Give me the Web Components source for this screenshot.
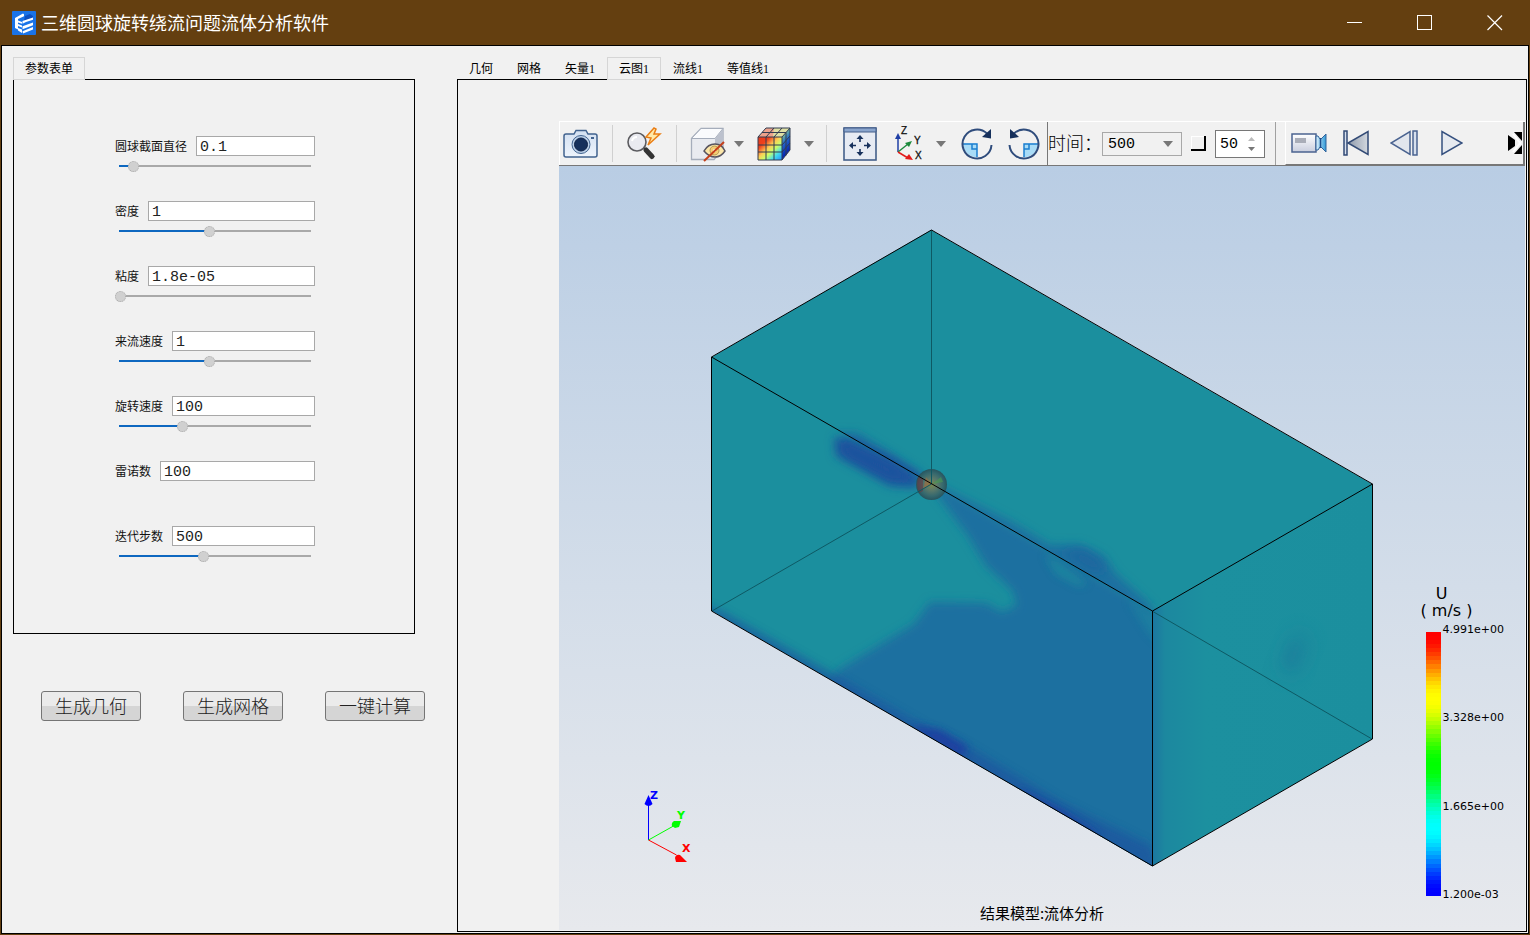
<!DOCTYPE html>
<html lang="zh-CN">
<head>
<meta charset="utf-8">
<title>三维圆球旋转绕流问题流体分析软件</title>
<style>
body{margin:0;background:#643f10;font-family:"Liberation Sans","Noto Sans CJK SC",sans-serif;color:#000}
</style>
</head>
<body>
<app-window caption="三维圆球旋转绕流问题流体分析软件">
  <side-panel></side-panel>
  <result-panel></result-panel>
</app-window>

<template id="t-window">
<style>
:host{display:flex;flex-direction:column;min-height:100vh;background:#643f10}
header{display:flex;align-items:center;height:45px;padding-left:12px;box-sizing:border-box}
h1{margin:0 auto 0 5px;padding-bottom:2px;font:400 18px/24px "Noto Sans CJK SC",sans-serif;color:#fff}
header button{width:70px;height:45px;padding:0;border:0;background:none}
header button svg{display:block;margin:auto}
main{flex:1;display:flex;margin:0 1px 1px;border:1px solid #000;background:#f1f1f1;padding:11px 1px 1px 11px}
::slotted(result-panel){flex:1;min-width:0}
</style>
<header>
<svg width="24" height="24" viewBox="0 0 24 24" aria-hidden="true"><rect width="24" height="24" rx="1" fill="#1a73e8"/><path d="M13 5 18 3 21 5v3l-9 2z" fill="#0d4fc0"/><path d="M3 7 11 2.500l1 .8v1.900L6 8v10.500L3 17z" fill="#fff"/><path d="M6 9.500 10 11v1.800L6 11.500zM6 13l4 1.500v2L6 15zm0 4 4 1.500V22l-4-2.500z" fill="#fff"/><path d="M10.500 10 21 6.500v2.300L14 11l-3.500 1.800zm0 5.200L21 11.500v2.700l-10.500 4zm0 5L21 16v2.500L11 22.500z" fill="#fff"/></svg>
<h1></h1>
<button aria-label="最小化"><svg width="16" height="16"><path d="M0 7.500h15" stroke="#fff"/></svg></button>
<button aria-label="最大化"><svg width="16" height="16"><rect x=".5" y=".5" width="14" height="14" fill="none" stroke="#fff"/></svg></button>
<button aria-label="关闭"><svg width="16" height="16"><path d="M.5.500 15 15M15 .500.500 15" stroke="#fff" stroke-width="1.200"/></svg></button>
</header>
<main><slot></slot></main>
</template>

<template id="t-tab">
<style>
:host{display:block;margin-bottom:-1px;position:relative}
button{display:block;height:23px;padding:1px 11px 0;border:1px solid transparent;background:none;color:#000;font:12px/20px "Liberation Serif","Noto Sans CJK SC",sans-serif;white-space:nowrap}
:host([selected]) button{border-color:#d6d6d6;background:#f1f1f1}
</style>
<button role="tab"><slot></slot></button>
</template>

<template id="t-field">
<style>
:host{display:block;height:65px}
.row{display:flex;align-items:center;gap:9px}
label{font:12px/20px "Noto Sans CJK SC",sans-serif;white-space:nowrap;color:#111}
.text{flex:1;min-width:0;box-sizing:border-box;height:20px;padding:2px 3px 0;border:1px solid #a8a8a8;border-radius:0;background:#fff;color:#222;font:15px/16px "Liberation Mono","Noto Sans CJK SC",monospace;outline:0}
.slide{appearance:none;display:block;width:200px;height:12px;margin:4px 0 0;background:linear-gradient(#0e68c0,#0e68c0) 4px 5px/calc(var(--v)*1.89px) 2px no-repeat,linear-gradient(#a9a9a9,#a9a9a9) 4px 5px/192px 2px no-repeat}
.slide::-webkit-slider-thumb{appearance:none;width:11px;height:11px;box-sizing:border-box;border-radius:50%;background:#d0d0d0;border:1px dotted #aaa}
.slide[hidden]{display:none}
</style>
<div class="row"><label for="v"></label><input class="text" id="v" type="text"></div>
<input class="slide" type="range" min="0" max="100" step="any">
</template>

<template id="t-side">
<style>
:host{display:block;width:444px;flex:none}
.tabs{display:flex}
section{box-sizing:border-box;width:402px;height:555px;border:1px solid #000;padding:56px 99px 0 101px}
.actions{display:flex;gap:42px;margin:57px 0 0 28px}
.actions button{width:100px;height:30px;padding:0 0 2px;border:1px solid #757575;border-radius:3px;background:linear-gradient(#ebebeb 50%,#d5d5d5 50%);color:#222;font:300 18px/26px "Noto Sans CJK SC",sans-serif}
</style>
<div class="tabs" role="tablist"><tab-item selected>参数表单</tab-item></div>
<section>
<param-field name="圆球截面直径" value="0.1" level="7"></param-field>
<param-field name="密度" value="1" level="47"></param-field>
<param-field name="粘度" value="1.8e-05" level="0"></param-field>
<param-field name="来流速度" value="1" level="47"></param-field>
<param-field name="旋转速度" value="100" level="33"></param-field>
<param-field name="雷诺数" value="100"></param-field>
<param-field name="迭代步数" value="500" level="44"></param-field>
</section>
<div class="actions"><button>生成几何</button><button>生成网格</button><button>一键计算</button></div>
</template>

<template id="t-result">
<style>
:host{display:flex;flex-direction:column}
.tabs{display:flex}
.page{flex:1;display:flex;flex-direction:column;border:1px solid #000;padding:41px 1px 1px 101px}
scene-view{flex:1}
</style>
<div class="tabs" role="tablist"><tab-item>几何</tab-item><tab-item>网格</tab-item><tab-item>矢量1</tab-item><tab-item selected>云图1</tab-item><tab-item>流线1</tab-item><tab-item>等值线1</tab-item></div>
<div class="page"><tool-strip></tool-strip><scene-view></scene-view></div>
</template>

<template id="t-tools">
<style>
:host{display:flex;box-sizing:border-box;height:45px;border-top:1px solid #fff;border-bottom:1px solid #777;box-shadow:inset 1px 0 #fff;overflow:hidden}
div{display:flex;align-items:center}
button{flex:none;width:48px;height:40px;padding:0;border:0;background:none}
button svg{display:block;margin:auto}
.w44{width:44px}.w46{width:46px}.w50{width:50px}.w54{width:54px}
.drop{width:16px}
.turn{margin-left:4px}
hr{flex:none;width:1px;height:37px;margin:0 8px 0 9px;border:0;background:#d0d0d0}
.time{border-left:1px solid #777;border-right:1px solid #a0a0a0;padding-right:10px;margin-right:9px}
label{padding-bottom:4px;font:300 18px/26px "Noto Sans CJK SC",sans-serif;white-space:nowrap}
.combo{display:grid;align-items:center}
.combo>*{grid-area:1/1}
.combo svg{justify-self:end;margin-right:9px;pointer-events:none}
select{appearance:none;width:80px;height:24px;padding:2px 5px 0;border:1px solid #a8a8a8;border-radius:0;background:#f1f1f1;color:#000;font:15px/20px "Liberation Mono",monospace}
.tick{appearance:none;width:15px;height:15px;margin:0 9px;border:solid #000;border-width:0 2px 2px 0;box-shadow:inset 1px 1px #fff;background:#f1f1f1}
.spin{box-sizing:border-box;width:50px;height:28px;border:1px solid #777;background:#fff}
.spin input{width:30px;height:24px;box-sizing:border-box;padding:2px 0 0 4px;border:0;background:none;color:#000;font:15px/22px "Liberation Mono",monospace}
.spin svg{margin-left:2px}
.play{flex:1;align-self:stretch;border-right:2px solid #777;border-bottom:1px solid #777;border-left:1px solid #fff}
.play .more{margin-left:auto;width:16px}
</style>
<div>
<button class="w44" aria-label="截图"><svg width="36" height="30" viewBox="0 0 36 30"><defs><linearGradient id="cg" x2="0" y2="1"><stop stop-color="#d3e0f1"/><stop offset="1" stop-color="#eef4fc"/></linearGradient></defs><path d="M3 5h8l2-3.500h10L25 5h7q2 0 2 2v19q0 2-2 2H3q-2 0-2-2V7q0-2 2-2z" fill="url(#cg)" stroke="#42638f" stroke-width="1.500"/><circle cx="18" cy="15.500" r="9" fill="#bcd0e8" stroke="#42638f"/><circle cx="18" cy="15.500" r="6.500" fill="#16305c" stroke="#0e2146"/><rect x="28" y="8" width="3" height="2" fill="#42638f"/></svg></button>
<hr>
<button class="w46" aria-label="快速查看"><svg width="36" height="34" viewBox="0 0 36 34"><path d="m16 20 3 2 9 8" stroke="#111" stroke-width="2"/><path d="m20 23 6 6.500" stroke="#333" stroke-width="5" stroke-linecap="round"/><circle cx="11" cy="15" r="9" fill="#e9eaf0" stroke="#5b5b5f" stroke-width="1.600"/><path d="M6 14q1-4 5-4" stroke="#fff" stroke-width="2" fill="none"/><path d="M28 1 20 10l5 1-3 7 12-11-6 0 2-5z" fill="#ffe9a8" stroke="#ea7d13" stroke-width="1.500"/></svg></button>
<hr>
<button class="w46" aria-label="显示"><svg width="36" height="36" viewBox="0 0 36 36"><path d="M1.500 12.500 11 2.500h22v21l-9 10H1.500z" fill="#e9ebf0" stroke="#a5adbb" stroke-width="1.300"/><path d="M1.500 12.500 11 2.500h22l-8 10z" fill="#fafbfd" stroke="#a5adbb"/><path d="M25 12.500 33 3v20l-8 10z" fill="#bcc1cd"/><path d="M14 25q4-7 11-7t10 7q-4 6-10 6t-11-6z" fill="#fbe6a8" stroke="#57535f" stroke-width="1.500"/><circle cx="24.500" cy="24.500" r="4.500" fill="#f5cd72" stroke="#b49756"/><circle cx="24.500" cy="24.500" r="1.500" fill="#fff"/><path d="M14 35 34 16" stroke="#c4401c" stroke-width="2"/></svg></button>
<button class="drop" aria-label="更多显示"><svg width="10" height="6"><path d="M0 0h10L5 6z" fill="#777"/></svg></button>
<button class="w54" aria-label="云图"><svg width="34" height="34" viewBox="0 0 34 34"><defs><linearGradient id="k1" y2="1"><stop stop-color="#e63a1c"/><stop offset=".25" stop-color="#f0401c"/><stop offset=".45" stop-color="#fc5"/><stop offset=".6" stop-color="#cf6"/><stop offset=".78" stop-color="#4de"/><stop offset="1" stop-color="#28f"/></linearGradient><linearGradient id="k2" y2="1" x2=".3"><stop stop-color="#cc8"/><stop offset=".25" stop-color="#7b9"/><stop offset=".5" stop-color="#26c"/><stop offset="1" stop-color="#01a"/></linearGradient></defs><path d="M1 10 9 1h24l-8 9z" fill="#eda28c"/><path d="M17 1h16l-8 9h-9z" fill="#dfe0a4"/><path d="M1 10h24v23H1z" fill="url(#k1)"/><path d="M25 10 33 1v22l-8 10z" fill="url(#k2)"/><path d="M1 10 9 1h24v22l-8 10H1zM1 10h24v23M25 10l8-9M9 10v23M17 10v23M1 18h24l8-9M1 25h24l8-9M9 10l8-9M17 10l8-9M5 5.500h24v23" fill="none" stroke="#333c50"/></svg></button>
<button class="drop" aria-label="更多云图"><svg width="10" height="6"><path d="M0 0h10L5 6z" fill="#777"/></svg></button>
<hr>
<button class="w50" aria-label="适应窗口"><svg width="34" height="34" viewBox="0 0 34 34"><rect x="1" y="1" width="32" height="32" fill="#e7ebf3" stroke="#445f8a" stroke-width="1.600"/><path d="M1 1h32v4H1z" fill="#8aa5cd" stroke="#445f8a"/><g fill="#16305c"><path d="m17 8 3.500 4h-7zm0 21 3.500-4h-7zM6 18.500l4-3.500v7zm22 0-4-3.500v7z"/><path d="M16.200 11h1.600v4h-1.600zm0 11h1.600v4h-1.600zM9 17.700h4v1.600H9zm12 0h4v1.600h-4z"/></g></svg></button>
<button aria-label="坐标轴"><svg width="30" height="36" viewBox="0 0 30 36"><path d="M4 26V10" stroke="#1f3fa5" stroke-width="1.500"/><path d="m4 7-3 6h6z" fill="#1f3fa5"/><path d="m4 26 10-8" stroke="#1c8a3c" stroke-width="1.500"/><path d="m18 15-7 2 4 4z" fill="#1c8a3c"/><path d="m4 26 10 6" stroke="#e21b1b" stroke-width="1.500"/><path d="m19 34-4-6-4 5z" fill="#e21b1b"/><g font-family="Liberation Sans" font-size="10" fill="#111" stroke="#111" stroke-width=".3"><text x="7" y="8">Z</text><text x="20" y="18">Y</text><text x="21" y="33">X</text></g></svg></button>
<button class="drop" aria-label="更多视角"><svg width="10" height="6"><path d="M0 0h10L5 6z" fill="#777"/></svg></button>
<button class="turn" aria-label="顺时针旋转"><svg width="34" height="34" viewBox="0 0 34 34"><path d="M3 16.500h14v14Q4 29 3 16.500z" fill="#a9dcf7"/><path d="M3 17h14v13" fill="none" stroke="#1c7fd0" stroke-width="1.500"/><path d="M12 17v5h5" fill="none" stroke="#1c7fd0" stroke-width="1.500"/><path d="M27 6.500A14.500 14.500 0 1 0 31.500 18" fill="none" stroke="#2f4c7c" stroke-width="2"/><path d="M31 2v9.500L22 10z" fill="#16305c"/></svg></button>
<button class="w46" aria-label="逆时针旋转"><svg width="34" height="34" viewBox="0 0 34 34"><g transform="matrix(-1 0 0 1 34 0)"><path d="M3 16.500h14v14Q4 29 3 16.500z" fill="#a9dcf7"/><path d="M3 17h14v13" fill="none" stroke="#1c7fd0" stroke-width="1.500"/><path d="M12 17v5h5" fill="none" stroke="#1c7fd0" stroke-width="1.500"/><path d="M27 6.500A14.500 14.500 0 1 0 31.500 18" fill="none" stroke="#2f4c7c" stroke-width="2"/><path d="M31 2v9.500L22 10z" fill="#16305c"/></g></svg></button>
</div>
<div class="time">
<label for="t">时间：</label>
<div class="combo"><select id="t"><option>500</option></select><svg width="10" height="6"><path d="M0 0h10L5 6z" fill="#777"/></svg></div>
<input class="tick" type="checkbox" aria-label="循环">
<div class="spin"><input type="text" value="50" aria-label="步数"><svg width="8" height="14"><path d="M0 4h7L3.500 0z" fill="#bbb"/><path d="M0 10h7l-3.500 4z" fill="#777"/></svg></div>
</div>
<div class="play">
<button class="w46" aria-label="录制"><svg width="36" height="22" viewBox="0 0 36 22"><defs><linearGradient id="v1" x2="0" y2="1"><stop stop-color="#fff"/><stop offset="1" stop-color="#c9cede"/></linearGradient><linearGradient id="v2"><stop stop-color="#dff2fc"/><stop offset="1" stop-color="#2e9ad8"/></linearGradient></defs><rect x="1" y="2" width="24" height="18" fill="url(#v1)" stroke="#4b6390" stroke-width="1.500"/><rect x="4" y="6" width="11" height="5" fill="#a9adb8"/><path d="M25 4h2l2 3h1l5-5v18l-5-5h-1l-2 3h-2z" fill="url(#v2)" stroke="#33639a"/><path d="M29.500 6v10" stroke="#1e4e8c" stroke-width="1.500"/></svg></button>
<button aria-label="第一帧"><svg width="28" height="26" viewBox="0 0 28 26"><defs><linearGradient id="p1"><stop stop-color="#8f9aab"/><stop offset="1" stop-color="#d3d8df"/></linearGradient></defs><rect x="2" y="1" width="3" height="24" fill="#d7e0ee" stroke="#324a75" stroke-width="1.500"/><path d="M26 1.500v23L6 13z" fill="url(#p1)" stroke="#324a75" stroke-width="1.500"/></svg></button>
<button aria-label="上一帧"><svg width="28" height="26" viewBox="0 0 28 26"><path d="M20 1.500v23L1 13z" fill="#e2e6ed" stroke="#4a6390" stroke-width="1.500"/><rect x="23" y="1" width="4" height="24" fill="#d7e0ee" stroke="#4a6390" stroke-width="1.500"/></svg></button>
<button aria-label="播放"><svg width="22" height="26" viewBox="0 0 22 26"><path d="M1 1.500v23L21 13z" fill="#e6eaf0" stroke="#35507f" stroke-width="1.500"/></svg></button>
<button class="more" aria-label="更多"><svg width="14" height="22" viewBox="0 0 14 22"><path d="M0 3 7 8v6L0 19z" fill="#000"/><path d="M6 0h8v9z" fill="#000"/><path d="M6 22h8v-9z" fill="#000"/><path d="m5 2 7 9-7 9" fill="none" stroke="#fff" stroke-width="2"/></svg></button>
</div>
</template>

<template id="t-legend">
<style>
:host{display:block}
p{margin:0;font:16px/17px "DejaVu Sans",sans-serif;text-align:center;width:52px}
.t{width:42px}
.scale{display:flex;height:277px;margin:5px 0 0 5px}
.bar{width:15px;margin:8px 0 5px}
ul{list-style:none;margin:0 0 0 2px;padding:0;display:flex;flex-direction:column;justify-content:space-between;font:11px/12px "DejaVu Sans",sans-serif}
</style>
<p class="t">U</p><p>( m/s )</p>
<div class="scale"><div class="bar"></div><ul><li>4.991e+00</li><li>3.328e+00</li><li>1.665e+00</li><li>1.200e-03</li></ul></div>
</template>

<template id="t-scene">
<style>
:host{display:grid;background:linear-gradient(#b9cde4,#d3dde9 55%,#e7e9ed)}
:host>*{grid-area:1/1}
.model{display:block;width:100%;height:100%}
.axes{align-self:end;margin:0 0 64px 80px}
color-legend{place-self:end;margin:0 21px 29px 0}
p{align-self:end;justify-self:center;margin:0 0 7px;font:15px/20px "Noto Sans CJK SC",sans-serif}
</style>
<svg class="model" viewBox="559 166 966 764" role="img" aria-label="速度云图">
<defs>
<clipPath id="front"><path d="M712 357 1152 611V866L712 611z"/></clipPath>
<clipPath id="top"><path d="M712 357 931 230 1372 484 1152 611z"/></clipPath>
<clipPath id="right"><path d="M1152 611 1372 484V739L1152 866z"/></clipPath>
<filter id="b5" x="-30%" y="-30%" width="160%" height="160%"><feGaussianBlur stdDeviation="5"/></filter>
<filter id="b3" x="-30%" y="-30%" width="160%" height="160%"><feGaussianBlur stdDeviation="4"/></filter>
<filter id="b9" x="-50%" y="-50%" width="200%" height="200%"><feGaussianBlur stdDeviation="9"/></filter>
<linearGradient id="edge"><stop stop-color="#1c76a0"/><stop offset=".06" stop-color="#1c889f"/><stop offset=".25" stop-color="#1c909f"/><stop offset="1" stop-color="#1b8f9e"/></linearGradient>
<radialGradient id="ball"><stop stop-color="#7c8a50"/><stop offset=".4" stop-color="#59786a"/><stop offset=".75" stop-color="#35686e"/><stop offset="1" stop-color="#27555f"/></radialGradient>
</defs>
<path d="M712 357 931 230 1372 484V739L1152 866 712 611z" fill="#1b8f9e"/>
<g clip-path="url(#top)">
<path d="M832 434 858 433 916 470 931 484 940 486 1012 522 1050 545 1080 544 1104 556 1116 574 1152 606 1152 625 931 500 832 450z" fill="#1c6fa0" filter="url(#b5)"/>
</g>
<g clip-path="url(#front)">
<path d="M925 478 952 492 1152 609 1170 640 1170 890 1140 868 826 684 838 670 879 645 914 624 930 602 986 603 1002 612 1017 605 1012 590 986 566 968 536z" fill="#1c6fa0" filter="url(#b5)"/>
<path d="M1044 554 1056 560 1088 584 1078 586 1056 574z" fill="#1c899f" opacity=".85" filter="url(#b3)"/>
<path d="M1128 600 1165 620 1165 650 1148 632z" fill="#1c88a0" opacity=".6" filter="url(#b3)"/>
<path d="M700 604 722 612 850 684 930 730 960 742 1060 802 1152 846 1160 880 1120 862 700 618z" fill="#1b559f" filter="url(#b5)" opacity=".75"/>
<path d="M914 726 940 730 968 748 960 758 914 731zM1020 790 1060 810 1100 836 1090 840 1020 796z" fill="#1a3fa0" filter="url(#b3)"/>
</g>
<path d="M834 438 848 437 890 456 922 476 916 488 890 486 836 456z" fill="#1b559e" filter="url(#b5)"/>
<path d="M842 442 890 464 912 480 890 478 846 454z" fill="#1b539e" filter="url(#b3)"/>
<path d="M1060 552 1084 550 1102 562 1104 572 1090 572z" fill="#1c689f" filter="url(#b5)"/>
<path d="M1152 611 1372 484V739L1152 866z" fill="url(#edge)"/>
<g clip-path="url(#right)"><ellipse cx="1295" cy="654" rx="13" ry="25" transform="rotate(20 1295 654)" fill="#1b7b9b" opacity=".45" filter="url(#b9)"/><ellipse cx="1292" cy="656" rx="8" ry="12" transform="rotate(20 1292 656)" fill="#1b7e9c" opacity=".4" filter="url(#b3)"/></g>
<circle cx="931.500" cy="484.500" r="15.500" fill="url(#ball)"/>
<path d="M919 476q-4 8 0 17l4-2v-12z" fill="#6c3740" opacity=".6"/>
<path d="M926 477l6 7-9 5z" fill="#b06a35" opacity=".5"/><path d="M932 484l9-7 2 5z" fill="#4a9a50" opacity=".6"/>
<path d="M931.500 230V484L712 611M1152 611 1372 739" fill="none" stroke="#0e5964"/>
<path d="M711.500 357 931.500 230 1372.500 484V739L1152.500 866 711.500 611zM711.500 357 1152.500 611 1372.500 484M1152.500 611V866" fill="none" stroke="#000"/>
</svg>
<svg class="axes" width="60" height="80" viewBox="0 0 60 80" aria-hidden="true"><path d="M9.500 54V16" stroke="#00f"/><path d="m9.500 9-4 9q4 4 8 0z" fill="#00f"/><path d="m9.500 54 25-14" stroke="#0f0"/><path d="m42 35-7 0q-3 2-2 5l3 2 4-1z" fill="#0f0"/><path d="m9.500 54 28 15" stroke="#f00"/><path d="m48 76-7-7q-4-1-5 3l1 4z" fill="#f00"/><g font-family="DejaVu Sans" font-weight="bold" font-size="11"><text x="11" y="13" fill="#00f">Z</text><text x="38" y="33" fill="#0f0">Y</text><text x="43" y="66" fill="#f00">X</text></g></svg>
<color-legend></color-legend>
<p>结果模型:流体分析</p>
</template>

<script>
class Base extends HTMLElement {
  constructor() {
    super();
    this.attachShadow({ mode: 'open' }).append(
      document.getElementById(this.constructor.template).content.cloneNode(true));
  }
  $(selector) { return this.shadowRoot.querySelector(selector); }
}
const define = (name, template, setup) => customElements.define(name, class extends Base {
  static template = template;
  connectedCallback() { if (setup) setup(this); }
});

define('tab-item', 't-tab', el =>
  el.$('button').setAttribute('aria-selected', el.hasAttribute('selected')));

define('param-field', 't-field', el => {
  el.$('label').textContent = el.getAttribute('name');
  el.$('.text').value = el.getAttribute('value');
  const slider = el.$('.slide');
  const level = el.getAttribute('level');
  slider.hidden = level === null;
  slider.setAttribute('aria-label', el.getAttribute('name'));
  slider.value = level || 0;
  const paint = () => slider.style.setProperty('--v', slider.value);
  slider.addEventListener('input', paint);
  paint();
});

define('color-legend', 't-legend', el => {
  const bands = 65, stops = [];
  for (let i = 0; i < bands; i++) {
    const t = i / (bands - 1) * 4, k = Math.min(3, Math.floor(t)), f = t - k;
    const hue = 60 * (k + f * f * (3 - 2 * f));
    stops.push(`hsl(${hue} 100% 50%) ${i / bands * 100}% ${(i + 1) / bands * 100}%`);
  }
  el.$('.bar').style.background = `linear-gradient(${stops})`;
});

define('tool-strip', 't-tools');
define('scene-view', 't-scene');
define('side-panel', 't-side');
define('result-panel', 't-result');
define('app-window', 't-window', el => { el.$('h1').textContent = el.getAttribute('caption'); });
</script>
</body>
</html>
